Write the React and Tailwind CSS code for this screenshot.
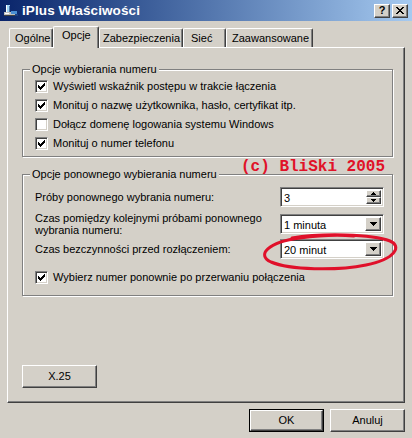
import React from "react";

const FONT = "font-['Liberation_Sans',Arial,sans-serif]";
const RAISED =
  "border border-t-white border-l-white border-r-[#404040] border-b-[#404040] shadow-[inset_-1px_-1px_0_#808080]";
const SUNKEN =
  "bg-white border border-t-[#808080] border-l-[#808080] border-r-white border-b-white shadow-[inset_1px_1px_0_#404040,inset_-1px_-1px_0_#d4d0c8]";

function CheckMark() {
  return (
    <svg width="7" height="7" viewBox="0 0 7 7" shapeRendering="crispEdges">
      <rect x="6" y="0" width="1" height="1" fill="#000" />
      <rect x="5" y="1" width="2" height="1" fill="#000" />
      <rect x="0" y="2" width="1" height="1" fill="#000" />
      <rect x="4" y="2" width="3" height="1" fill="#000" />
      <rect x="0" y="3" width="2" height="1" fill="#000" />
      <rect x="3" y="3" width="3" height="1" fill="#000" />
      <rect x="0" y="4" width="5" height="1" fill="#000" />
      <rect x="1" y="5" width="3" height="1" fill="#000" />
      <rect x="2" y="6" width="1" height="1" fill="#000" />
    </svg>
  );
}

function CheckRow({ checked, label }) {
  return (
    <div className="h-[19px] flex items-center pl-[12px]">
      <span
        className={`w-[13px] h-[13px] shrink-0 flex items-center justify-center ${SUNKEN}`}
      >
        {checked && <CheckMark />}
      </span>
      <span className="ml-[5px] text-[11px] leading-[13px] text-black whitespace-nowrap">
        {label}
      </span>
    </div>
  );
}

function DownArrow() {
  return (
    <svg width="7" height="4" viewBox="0 0 7 4" shapeRendering="crispEdges">
      <path d="M0 0H7V1H6V2H5V3H4V4H3V3H2V2H1V1H0Z" fill="#000" />
    </svg>
  );
}

function Combo({ value }) {
  return (
    <div className={`w-[104px] h-[20px] flex items-stretch p-[2px] ${SUNKEN}`}>
      <span className="flex-1 text-[11px] leading-[14px] pl-[1px] pt-[1px] text-black">
        {value}
      </span>
      <span
        className={`w-[16px] bg-[#d4d0c8] flex items-center justify-center ${RAISED}`}
      >
        <DownArrow />
      </span>
    </div>
  );
}

function Spin({ value }) {
  return (
    <div className={`w-[104px] h-[20px] flex items-stretch p-[2px] ${SUNKEN}`}>
      <span className="flex-1 text-[11px] leading-[14px] pl-[1px] pt-[1px] text-black">
        {value}
      </span>
      <span className="w-[15px] flex flex-col">
        <span
          className={`flex-1 bg-[#d4d0c8] flex items-center justify-center ${RAISED}`}
        >
          <svg width="5" height="3" viewBox="0 0 5 3" shapeRendering="crispEdges">
            <path d="M2 0H3V1H4V2H5V3H0V2H1V1H2Z" fill="#000" />
          </svg>
        </span>
        <span
          className={`flex-1 bg-[#d4d0c8] flex items-center justify-center ${RAISED}`}
        >
          <svg width="5" height="3" viewBox="0 0 5 3" shapeRendering="crispEdges">
            <path d="M0 0H5V1H4V2H3V3H2V2H1V1H0Z" fill="#000" />
          </svg>
        </span>
      </span>
    </div>
  );
}

function Button({ children, isDefault }) {
  const inner = (
    <div
      className={`w-full h-full flex items-center justify-center bg-[#d4d0c8] text-[11px] text-black ${RAISED}`}
    >
      {children}
    </div>
  );
  if (isDefault) {
    return (
      <div className="w-[75px] h-[23px] border border-black">{inner}</div>
    );
  }
  return <div className="w-[75px] h-[23px]">{inner}</div>;
}

function Tab({ label, width, selected, pad = 5 }) {
  if (selected) {
    return (
      <div
        className="h-[22px] -mb-px relative z-10 bg-[#d4d0c8] border-t border-l border-r border-t-white border-l-white border-r-[#404040] rounded-t-[2px] shadow-[inset_-1px_0_0_#808080] text-[11px] leading-[13px] text-black pt-[2px] whitespace-nowrap"
        style={{ width, paddingLeft: pad }}
      >
        {label}
      </div>
    );
  }
  return (
    <div
      className="h-[19px] bg-[#d4d0c8] border-t border-l border-r border-t-white border-l-white border-r-[#404040] rounded-t-[2px] shadow-[inset_-1px_0_0_#808080] text-[11px] leading-[13px] text-black pt-[3px] whitespace-nowrap overflow-hidden"
      style={{ width, paddingLeft: pad }}
    >
      {label}
    </div>
  );
}

function Group({ title, children, className = "" }) {
  return (
    <fieldset
      className={`ml-[14px] w-[371px] border border-[#808080] shadow-[inset_1px_1px_0_#fff,1px_1px_0_#fff] px-0 ${className}`}
    >
      <legend className="ml-[7px] px-[2px] text-[11px] leading-[14px] text-black bg-[#d4d0c8]">
        {title}
      </legend>
      {children}
    </fieldset>
  );
}

function FormRow({ label, children, className = "" }) {
  return (
    <div className={`flex items-center justify-between pl-[12px] pr-[8px] ${className}`}>
      <span className="text-[11px] leading-[12px] text-black">{label}</span>
      {children}
    </div>
  );
}

export default function App() {
  return (
    <div
      className={`${FONT} w-[412px] h-[438px] bg-[#d4d0c8] flex flex-col overflow-hidden relative`}
    >
      {/* Title bar */}
      <div className="h-[21px] flex items-center bg-gradient-to-r from-[#0a246a] to-[#a6caf0] pl-[3px] pr-[4px]">
        <svg width="16" height="16" viewBox="0 0 16 16" shapeRendering="crispEdges">
          <rect x="1" y="9" width="11" height="4" fill="#c0c0c0" />
          <rect x="1" y="12" width="11" height="1" fill="#404040" />
          <rect x="2" y="10" width="4" height="1" fill="#ffffff" />
          <rect x="3" y="2" width="4" height="7" fill="#9fd3f5" />
          <rect x="3" y="2" width="1" height="7" fill="#ffffff" />
          <rect x="6" y="3" width="1" height="6" fill="#4b74a8" />
          <rect x="8" y="8" width="6" height="3" fill="#4a8fd4" />
          <rect x="12" y="11" width="3" height="2" fill="#1c3f80" />
        </svg>
        <span className="ml-[3px] text-[13.5px] font-bold text-white leading-[16px] whitespace-nowrap tracking-[0.1px]">
          iPlus Właściwości
        </span>
        <div className="ml-auto flex items-center gap-[2px] mr-[0px]">
          <div
            className={`w-[16px] h-[14px] bg-[#d4d0c8] flex items-center justify-center ${RAISED}`}
          >
            <span className="text-[11px] font-bold leading-[11px] text-black">?</span>
          </div>
          <div
            className={`w-[16px] h-[14px] bg-[#d4d0c8] flex items-center justify-center ${RAISED}`}
          >
            <svg width="8" height="7" viewBox="0 0 8 7" shapeRendering="crispEdges">
              <path
                d="M0 0H2V1H3V2H5V1H6V0H8V1H7V2H6V3H5V4H6V5H7V6H8V7H6V6H5V5H3V6H2V7H0V6H1V5H2V4H3V3H2V2H1V1H0Z"
                fill="#000"
              />
            </svg>
          </div>
        </div>
      </div>

      {/* Tabs */}
      <div className="mt-[5px] h-[21px] flex items-end pl-[9px]">
        <Tab label="Ogólne" width={44} pad={5} />
        <Tab label="Opcje" width={46} pad={8} selected />
        <Tab label="Zabezpieczenia" width={84} pad={3} />
        <Tab label="Sieć" width={43} pad={7} />
        <Tab label="Zaawansowane" width={87} pad={5} />
      </div>

      {/* Panel */}
      <div
        className={`ml-[7px] w-[398px] h-[356px] bg-[#d4d0c8] flex flex-col ${RAISED}`}
      >
        <Group title="Opcje wybierania numeru" className="mt-[14px] pt-[1px] pb-[3px]">
          <CheckRow checked label="Wyświetl wskaźnik postępu w trakcie łączenia" />
          <CheckRow checked label="Monituj o nazwę użytkownika, hasło, certyfikat itp." />
          <CheckRow label="Dołącz domenę logowania systemu Windows" />
          <CheckRow checked label="Monituj o numer telefonu" />
        </Group>

        <div className="ml-[14px] w-[371px] h-[10px] flex justify-end pr-[8px] relative z-10">
          <span className="font-['Liberation_Mono',monospace] font-bold text-[16px] leading-[12px] mt-[4px] text-[#e01228] whitespace-nowrap">
            (c) BliSki 2005
          </span>
        </div>

        <Group title="Opcje ponownego wybierania numeru" className="pt-[6px] pb-[8px]">
          <FormRow label="Próby ponownego wybrania numeru:" className="h-[20px]">
            <Spin value="3" />
          </FormRow>
          <FormRow
            label={
              <>
                Czas pomiędzy kolejnymi próbami ponownego
                <br />
                wybrania numeru:
              </>
            }
            className="h-[20px] mt-[7px]"
          >
            <Combo value="1 minuta" />
          </FormRow>
          <FormRow label="Czas bezczynności przed rozłączeniem:" className="h-[20px] mt-[5px]">
            <Combo value="20 minut" />
          </FormRow>
          <div className="mt-[9px]">
            <CheckRow checked label="Wybierz numer ponownie po przerwaniu połączenia" />
          </div>
        </Group>

        <div className="mt-auto mb-[14px] ml-[14px]">
          <Button>X.25</Button>
        </div>
      </div>

      {/* Bottom buttons */}
      <div className="mt-[6px] flex justify-end gap-[6px] pr-[7px]">
        <Button isDefault>OK</Button>
        <Button>Anuluj</Button>
      </div>

      {/* Hand-drawn red ellipse annotation over the dialog */}
      <svg
        className="absolute left-[262px] top-[232px] pointer-events-none"
        width="140"
        height="42"
        viewBox="0 0 140 42"
      >
        <path
          d="M30 6 C 60 1, 110 2, 128 9 C 140 14, 134 27, 104 33 C 74 39, 28 38, 9 30 C -6 23, 6 10, 38 6 C 60 3, 80 3, 92 4"
          fill="none"
          stroke="#e0102a"
          strokeWidth="3"
          strokeLinecap="round"
        />
      </svg>
    </div>
  );
}
